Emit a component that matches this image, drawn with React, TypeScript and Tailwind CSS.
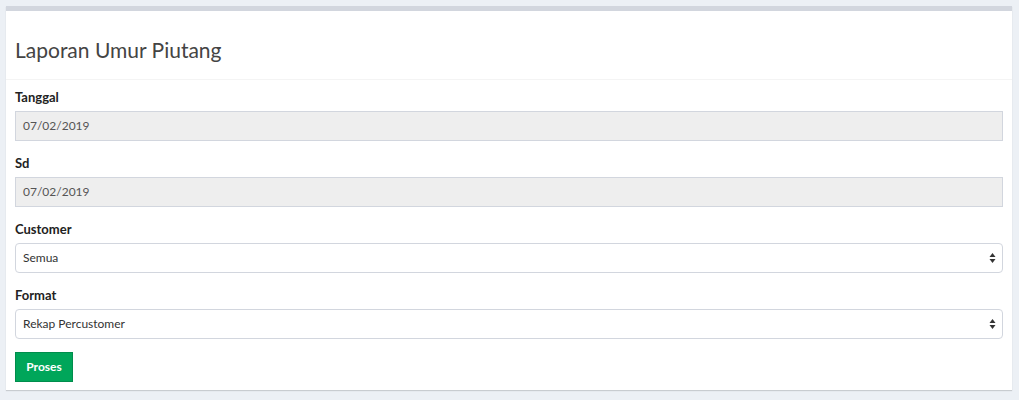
import React from "react";

function Arrows() {
  return (
    <svg width="7" height="12" viewBox="0 0 7 12" className="pointer-events-none">
      <path d="M3.5 1 L6.5 5 L0.5 5 Z" fill="#333" />
      <path d="M3.5 11 L6.5 7 L0.5 7 Z" fill="#333" />
    </svg>
  );
}

function Field({ label, children }: { label: string; children: React.ReactNode }) {
  return (
    <div className="mb-[12px]">
      <div className="h-[20px] leading-[20px] text-[13px] font-bold text-[#222] mb-[4px]">{label}</div>
      {children}
    </div>
  );
}

function ReadInput({ value }: { value: string }) {
  return (
    <div className="h-[30px] border border-[#d2d6de] bg-[#eeeeee] px-[7px] flex items-center text-[12px] text-[#555]">
      {value}
    </div>
  );
}

function Select({ value }: { value: string }) {
  return (
    <div className="h-[30px] border border-[#d2d6de] bg-white rounded-[4px] px-[7px] flex items-center justify-between text-[12px] text-[#333]">
      <span>{value}</span>
      <span className="mr-[-1px]">
        <Arrows />
      </span>
    </div>
  );
}

export default function App() {
  return (
    <div
      className="min-h-[400px] bg-[#ecf0f5] pt-[6px] pl-[6px] pr-[7px]"
      style={{ fontFamily: "Lato, 'Open Sans', sans-serif" }}
    >
      <div className="bg-white border-t-[5px] border-[#d2d6de] shadow-[0_1px_1px_rgba(0,0,0,0.15)]">
        <div className="h-[69px] border-b border-[#f4f4f4] px-[9px] flex items-center pt-[9px]">
          <h3 className="text-[21px] text-[#444] font-normal">Laporan Umur Piutang</h3>
        </div>
        <div className="px-[9px] pt-[7px] pb-[8px]">
          <Field label="Tanggal">
            <ReadInput value="07/02/2019" />
          </Field>
          <Field label="Sd">
            <ReadInput value="07/02/2019" />
          </Field>
          <Field label="Customer">
            <Select value="Semua" />
          </Field>
          <Field label="Format">
            <Select value="Rekap Percustomer" />
          </Field>
          <button className="mt-[1px] h-[30px] w-[58px] bg-[#00a65a] border border-[#008d4c] text-white text-[12px] font-bold">
            Proses
          </button>
        </div>
      </div>
    </div>
  );
}
